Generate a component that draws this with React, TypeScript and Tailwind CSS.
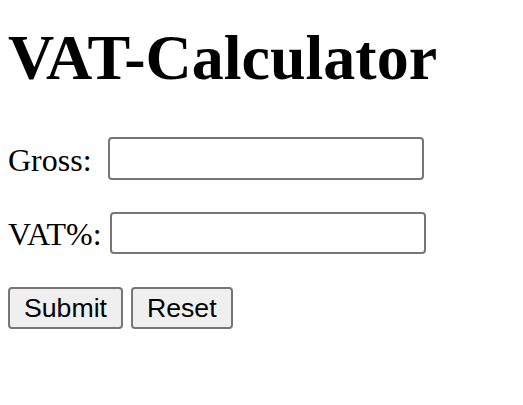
import React, { useState } from "react";

export default function App() {
  const [gross, setGross] = useState("");
  const [vat, setVat] = useState("");

  const reset = () => {
    setGross("");
    setVat("");
  };

  return (
    <div className="min-h-[405px] bg-white p-2 text-black font-['Liberation_Serif','Times_New_Roman',serif]">
      <h1 className="mt-[13px] text-[64px] font-bold leading-[74px]">VAT-Calculator</h1>

      <form
        onSubmit={(e) => e.preventDefault()}
        onReset={reset}
        className="flex flex-col"
      >
        {/* Gross row */}
        <div className="mt-[42px] flex items-center">
          <label htmlFor="gross" className="pt-[2px] text-[32px] leading-none">
            Gross:
          </label>
          <input
            id="gross"
            type="text"
            value={gross}
            onChange={(e) => setGross(e.target.value)}
            className="ml-4 h-[43px] w-[316px] rounded-[4px] border-2 border-[#767676] bg-white px-1 outline-none"
          />
        </div>

        {/* VAT row */}
        <div className="mt-[32px] flex items-center">
          <label htmlFor="vat" className="pt-[2px] text-[32px] leading-none">
            VAT%:
          </label>
          <input
            id="vat"
            type="text"
            value={vat}
            onChange={(e) => setVat(e.target.value)}
            className="ml-2 h-[42px] w-[316px] rounded-[4px] border-2 border-[#767676] bg-white px-1 outline-none"
          />
        </div>

        {/* Buttons */}
        <div className="mt-[33px] flex gap-2 font-['Liberation_Sans',Arial,sans-serif]">
          <button
            type="submit"
            className="h-[42px] rounded-[4px] border-2 border-[#767676] bg-[#efefef] px-[14px] text-[26.67px] leading-none"
          >
            Submit
          </button>
          <button
            type="reset"
            className="h-[42px] rounded-[4px] border-2 border-[#767676] bg-[#efefef] px-[14px] text-[26.67px] leading-none"
          >
            Reset
          </button>
        </div>
      </form>
    </div>
  );
}
